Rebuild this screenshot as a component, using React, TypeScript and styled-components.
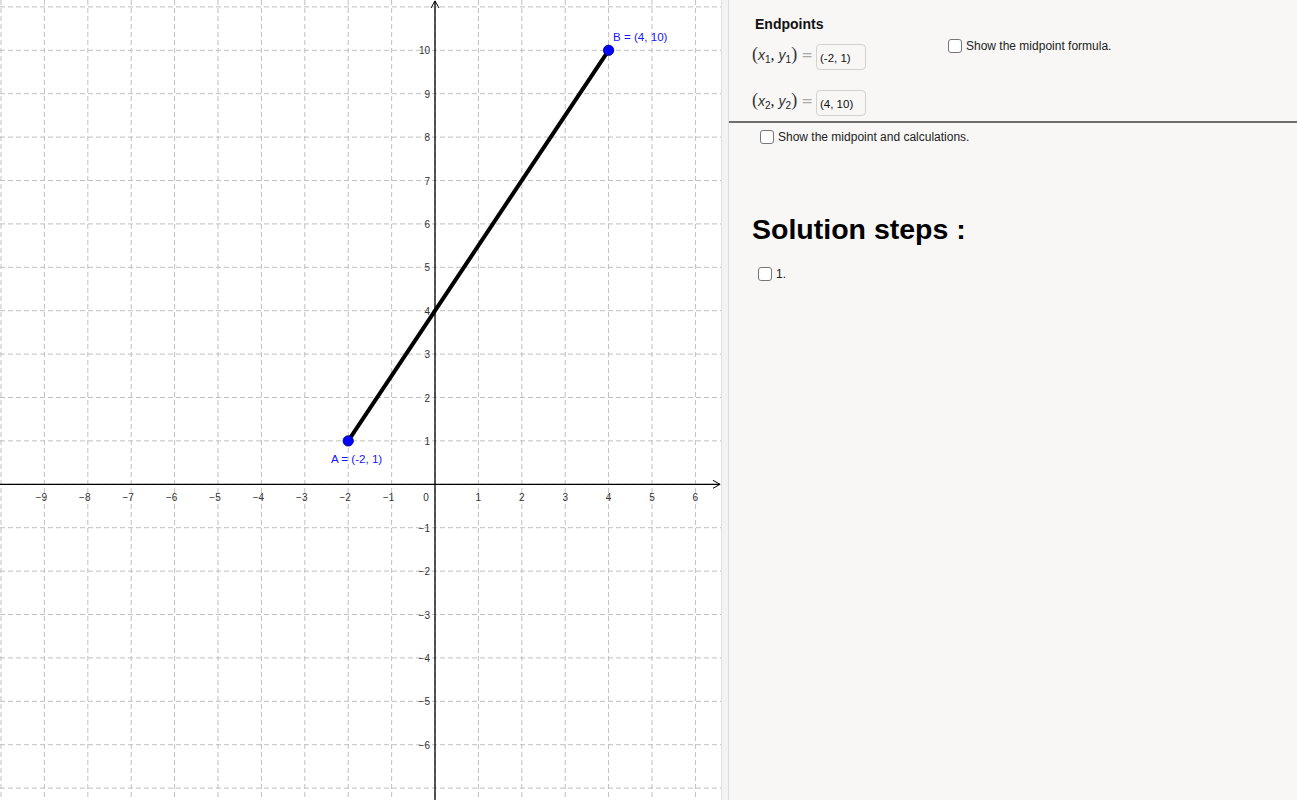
import styled, { createGlobalStyle } from "styled-components";

const GlobalStyle = createGlobalStyle`
  html, body {
    margin: 0;
    padding: 0;
    overflow: hidden;
    background: #ffffff;
  }
`;

// graph coordinates
const W = 721;
const H = 800;
const OX = 435;
const OY = 484.3;
const U = 43.4;

const px = (x: number) => OX + x * U;
const py = (y: number) => OY - y * U;

const xs = Array.from({ length: 17 }, (_, i) => i - 10); // -10..6
const ys = Array.from({ length: 19 }, (_, i) => i - 7); // -7..11

const minus = (n: number) => (n < 0 ? `\u2212${-n}` : `${n}`);

const Graph = () => {
  const A = { x: px(-2), y: py(1) };
  const B = { x: px(4), y: py(10) };
  return (
    <GraphSvg width={W} height={H} viewBox={`0 0 ${W} ${H}`}>
      {xs.map((x) => (
        <line key={"gx" + x} x1={px(x)} y1={0} x2={px(x)} y2={H} stroke="#c0c0c0" strokeWidth={1} strokeDasharray="5 3" />
      ))}
      {ys.map((y) => (
        <line key={"gy" + y} x1={0} y1={py(y)} x2={W} y2={py(y)} stroke="#c0c0c0" strokeWidth={1} strokeDasharray="5 3" />
      ))}

      {/* axes */}
      <line x1={0} y1={OY} x2={W - 1} y2={OY} stroke="#000" strokeWidth={1.3} />
      <line x1={OX} y1={1} x2={OX} y2={H} stroke="#000" strokeWidth={1.3} />
      <polyline points={`${W - 8},${OY - 4} ${W - 1},${OY} ${W - 8},${OY + 4}`} fill="none" stroke="#000" strokeWidth={1} />
      <polyline points={`${OX - 4},${8} ${OX},${1} ${OX + 4},${8}`} fill="none" stroke="#000" strokeWidth={1} />

      {/* tick labels */}
      {xs
        .filter((x) => x !== 0 && x !== -10)
        .map((x) => (
          <TickText key={"lx" + x} x={px(x) + (x < 0 ? -3 : 0)} y={OY + 17} textAnchor="middle">
            {minus(x)}
          </TickText>
        ))}
      <TickText x={OX - 9} y={OY + 17} textAnchor="middle">0</TickText>
      {ys
        .filter((y) => y !== 0 && y !== 11 && y !== -7)
        .map((y) => (
          <TickText key={"ly" + y} x={OX - 5} y={py(y) + 4} textAnchor="end">
            {minus(y)}
          </TickText>
        ))}

      {/* segment */}
      <line x1={A.x} y1={A.y} x2={B.x} y2={B.y} stroke="#000" strokeWidth={4} />
      <circle cx={A.x} cy={A.y} r={5.2} fill="#0000ff" stroke="#00007a" strokeWidth={0.8} />
      <circle cx={B.x} cy={B.y} r={5.2} fill="#0000ff" stroke="#00007a" strokeWidth={0.8} />
      <PointLabel x={331} y={463}>A = (-2, 1)</PointLabel>
      <PointLabel x={613} y={41}>B = (4, 10)</PointLabel>
    </GraphSvg>
  );
};

const Checkbox = ({ label }: { label: string }) => (
  <CheckRow>
    <Box />
    <CheckText>{label}</CheckText>
  </CheckRow>
);

const Coord = ({ n, value }: { n: number; value: string }) => (
  <CoordRow>
    <MathLabel>
      <Paren>(</Paren>
      <i>x</i>
      <sub>{n}</sub>, <i>y</i>
      <sub>{n}</sub>
      <Paren>)</Paren> <Eq>=</Eq>
    </MathLabel>
    <InputBox>{value}</InputBox>
  </CoordRow>
);

export default function App() {
  return (
    <>
      <GlobalStyle />
      <Page>
        <GraphArea>
          <Graph />
        </GraphArea>
        <Divider />
        <Panel>
          <TopSection>
            <EndpointsCol>
              <Title>Endpoints</Title>
              <Coord n={1} value="(-2, 1)" />
              <Coord n={2} value="(4, 10)" />
            </EndpointsCol>
            <FormulaCol>
              <Checkbox label="Show the midpoint formula." />
            </FormulaCol>
          </TopSection>
          <Rule />
          <LowerSection>
            <Indent $left={31}>
              <Checkbox label="Show the midpoint and calculations." />
            </Indent>
            <Heading>Solution steps :</Heading>
            <Indent $left={29}>
              <Checkbox label="1." />
            </Indent>
          </LowerSection>
        </Panel>
      </Page>
    </>
  );
}

const Page = styled.div`
  display: flex;
  width: 1297px;
  height: 800px;
  overflow: hidden;
  font-family: "Liberation Sans", Arial, sans-serif;
`;

const GraphArea = styled.div`
  width: ${W}px;
  height: 800px;
  background: #ffffff;
  flex-shrink: 0;
`;

const GraphSvg = styled.svg`
  display: block;
`;

const TickText = styled.text`
  font-family: "Liberation Sans", Arial, sans-serif;
  font-size: 10px;
  fill: #333333;
`;

const PointLabel = styled.text`
  font-family: "Liberation Sans", Arial, sans-serif;
  font-size: 11.6px;
  fill: #1515ff;
`;

const Divider = styled.div`
  width: 6px;
  flex-shrink: 0;
  background: #f3f3f3;
  border-left: 1px solid #e0e0e0;
  border-right: 1px solid #dcdcdc;
`;

const Panel = styled.div`
  flex: 1;
  background: #f8f7f6;
  display: flex;
  flex-direction: column;
`;

const TopSection = styled.div`
  display: flex;
  height: 121px;
  padding: 16px 0 0 23px;
  box-sizing: border-box;
`;

const EndpointsCol = styled.div`
  width: 196px;
  display: flex;
  flex-direction: column;
`;

const Title = styled.div`
  font-weight: bold;
  font-size: 14px;
  line-height: 16px;
  color: #111;
  margin-left: 3px;
`;

const CoordRow = styled.div`
  display: flex;
  align-items: center;
  height: 26px;
  margin-top: 12px;
  & + & {
    margin-top: 20px;
  }
`;

const MathLabel = styled.span`
  font-family: "Liberation Serif", "DejaVu Serif", serif;
  font-size: 16px;
  color: #222;
  width: 64px;
  white-space: nowrap;
  margin-top: -6px;

  i {
    font-family: "Liberation Sans", Arial, sans-serif;
    font-style: italic;
    font-size: 14px;
    color: #333;
  }

  sub {
    font-family: "Liberation Sans", Arial, sans-serif;
    font-size: 10px;
    font-style: normal;
    vertical-align: -3px;
  }
`;

const Paren = styled.span`
  font-size: 18px;
  color: #333;
`;

const Eq = styled.span`
  color: #aaa;
  font-family: "DejaVu Sans", sans-serif;
  font-size: 14px;
`;

const InputBox = styled.div`
  width: 50px;
  height: 26px;
  box-sizing: border-box;
  border: 1px solid #d2d2d2;
  border-radius: 4px;
  background: #f8f7f6;
  font-size: 11.5px;
  color: #111;
  padding: 7px 0 0 3px;
`;

const FormulaCol = styled.div`
  padding-top: 23px;
`;

const CheckRow = styled.label`
  display: flex;
  align-items: center;
  gap: 4px;
`;

const Box = styled.span`
  width: 14px;
  height: 14px;
  box-sizing: border-box;
  border: 1.5px solid #777;
  border-radius: 3px;
  background: #fff;
  flex-shrink: 0;
`;

const CheckText = styled.span`
  font-size: 12px;
  color: #222;
`;

const Rule = styled.div`
  height: 2px;
  background: #6e6e6e;
  flex-shrink: 0;
`;

const LowerSection = styled.div`
  display: flex;
  flex-direction: column;
  padding-top: 7px;
`;

const Indent = styled.div<{ $left: number }>`
  padding-left: ${(p) => p.$left}px;
`;

const Heading = styled.div`
  font-family: "Liberation Sans", Arial, sans-serif;
  font-weight: bold;
  font-size: 28.5px;
  line-height: 32px;
  color: #000;
  padding-left: 23px;
  margin-top: 69px;
  margin-bottom: 22px;
`;
